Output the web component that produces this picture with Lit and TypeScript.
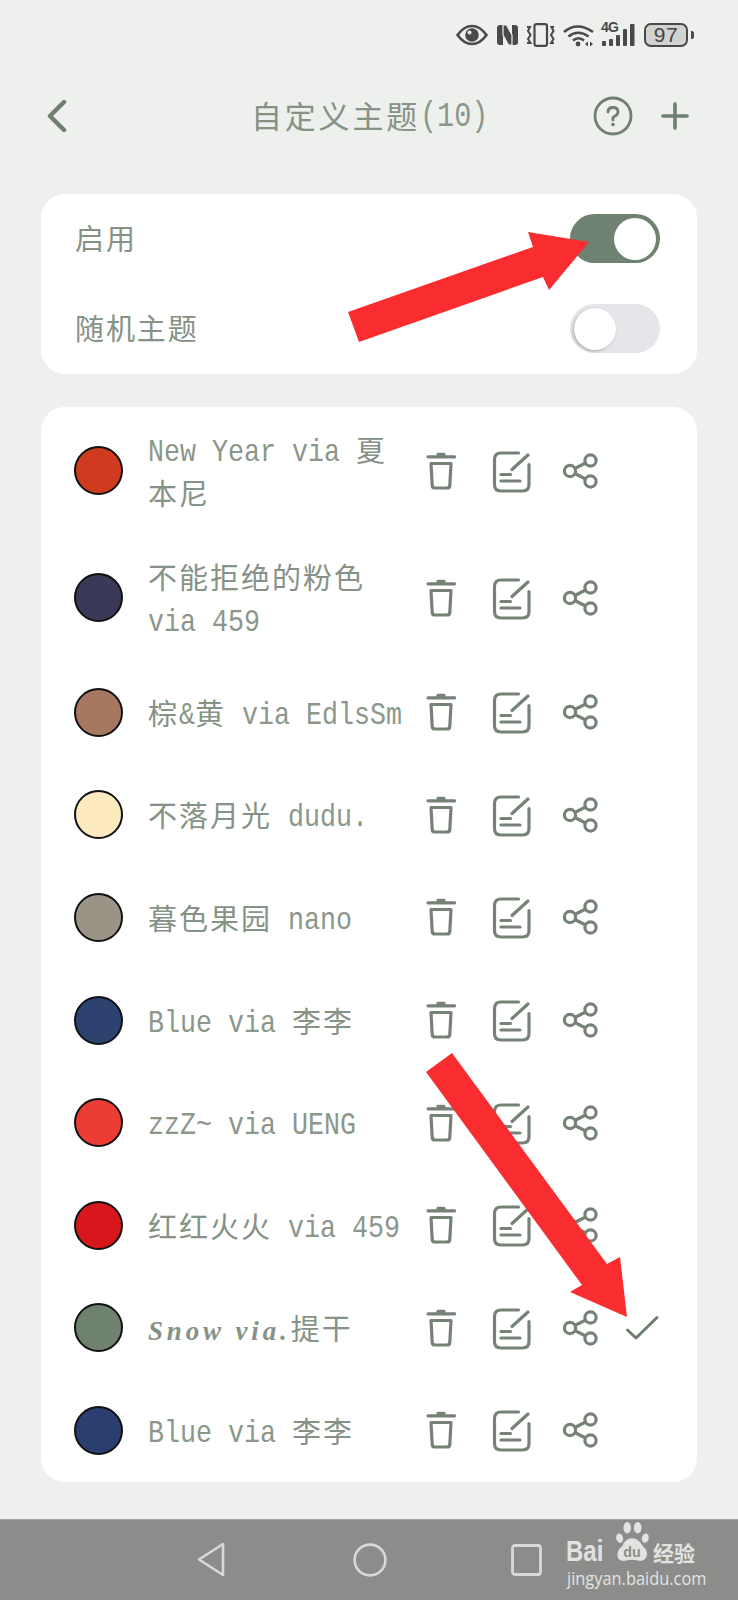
import { LitElement, html, css, svg } from "lit";
import { customElement } from "lit/decorators.js";

type Theme = { color: string; lines: string[]; script?: boolean; checked?: boolean };

const THEMES: Theme[] = [
  { color: "#d03a1f", lines: ["New Year via 夏", "本尼"] },
  { color: "#3a3a58", lines: ["不能拒绝的粉色", "via 459"] },
  { color: "#a67860", lines: ["棕&黄 via EdlsSm"] },
  { color: "#fdeabf", lines: ["不落月光 dudu."] },
  { color: "#9b9486", lines: ["暮色果园 nano"] },
  { color: "#2e4270", lines: ["Blue via 李李"] },
  { color: "#ec3c36", lines: ["zzZ~ via UENG"] },
  { color: "#d8171c", lines: ["红红火火 via 459"] },
  { color: "#6f8270", lines: ["Snow via.提干"], script: true, checked: true },
  { color: "#2b3e70", lines: ["Blue via 李李"] },
];

const trash = html`<svg class="ic" width="30" height="40" viewBox="0 0 30 40" fill="none" stroke="#768276" stroke-width="3.2" stroke-linecap="round" stroke-linejoin="round">
  <path d="M2 5.8H28.5" /><path d="M12 3.4H18" />
  <path d="M5 12.5H25L23.8 34.5Q23.6 37 21 37H9Q6.4 37 6.2 34.5Z" />
</svg>`;

const edit = html`<svg class="ic" width="40" height="44" viewBox="0 0 40 44" fill="none" stroke="#768276" stroke-width="3.2" stroke-linecap="round" stroke-linejoin="round">
  <path d="M27.5 4H10Q3.5 4 3.5 10.5V35.5Q3.5 42 10 42H31.5Q38 42 38 35.5V15.5" />
  <path d="M37 6L21 20.5" /><path d="M10 25.5H19.5" /><path d="M10 32H29" />
</svg>`;

const share = html`<svg class="ic" width="36" height="36" viewBox="0 0 36 36" fill="none" stroke="#768276" stroke-width="3.2">
  <circle cx="8" cy="18" r="5.6" /><circle cx="28.5" cy="7.5" r="5.6" /><circle cx="28.5" cy="28.5" r="5.6" />
  <path d="M12.8 15.5L23.7 10" /><path d="M12.8 20.5L23.7 26" />
</svg>`;

const check = html`<svg class="ic" width="40" height="40" viewBox="0 0 40 40" fill="none" stroke="#6f7d6f" stroke-width="3" stroke-linecap="round" stroke-linejoin="round">
  <path d="M5.5 22L14 30L35 9.5" />
</svg>`;

function segments(line: string, script?: boolean) {
  return line.split(/([\u4e00-\u9fff]+)/).filter(Boolean).map((s) =>
    /[\u4e00-\u9fff]/.test(s)
      ? html`<span class="cjk">${s}</span>`
      : script
      ? html`<span class="script">${s}</span>`
      : html`<span class="lat">${s}</span>`
  );
}

@customElement("app-root")
export class AppRoot extends LitElement {
  static styles = css`
    :host { display: block; position: relative; width: 738px; height: 1600px; overflow: hidden; background: #edf0ed;
      font-family: "Noto Sans CJK SC", sans-serif; color: #859285; }
    .status { height: 70px; display: flex; align-items: center; justify-content: flex-end; padding-right: 44px; box-sizing: border-box; }
    .status svg { display: block; flex: none; }
    .s-eye { margin-right: 9px; }
    .s-n { margin-right: 8px; }
    .s-vib { margin-right: 7px; }
    .s-wifi { margin-right: 7px; }
    .s-sig { margin-right: 8px; position: relative; width: 35px; height: 24px; }
    .g4 { position: absolute; left: 0; top: -3px; font: 700 14px/15px "Liberation Sans", sans-serif; color: #484a48; letter-spacing: -0.8px; }
    .batt { width: 44px; height: 24px; box-sizing: border-box; border: 2px solid #484a48; border-radius: 7px; background: #d2d3d0;
      font: 400 21px/20px "Liberation Sans", sans-serif; color: #444; text-align: center; letter-spacing: 0.5px; }
    .tip { width: 3px; height: 8px; background: #484a48; border-radius: 0 2px 2px 0; margin-left: 3px; }

    .header { height: 92px; display: flex; align-items: center; position: relative; }
    .back { margin-left: 46px; }
    .title { position: absolute; left: 251px; top: 0; font-size: 31px; line-height: 90px; white-space: pre; }
    .title .t-cjk { letter-spacing: 2.8px; }
    .title .t-lat { font: 400 28.5px/90px "Liberation Mono", monospace; display: inline-block; transform: scaleY(1.2); transform-origin: 50% 70%; color: #8a978a; }
    .h-right { margin-left: auto; display: flex; align-items: center; margin-right: 49px; gap: 28px; }

    .card { background: #fff; border-radius: 24px; margin: 0 41px; }
    .settings { margin-top: 32px; height: 180px; box-sizing: border-box; padding: 20px 37px 21px 34px; display: flex; flex-direction: column; gap: 41px; }
    .set-row { height: 49px; display: flex; align-items: center; justify-content: space-between; font-size: 29px; letter-spacing: 1.9px; }
    .set-label { padding-bottom: 4px; }
    .toggle { width: 90px; height: 49px; border-radius: 25px; box-sizing: border-box; display: flex; align-items: center; padding: 0 4px; }
    .toggle.on { background: #6f8170; justify-content: flex-end; }
    .toggle.off { background: #e6e6ea; justify-content: flex-start; }
    .knob { width: 42px; height: 42px; border-radius: 50%; background: #fff; }
    .off .knob { box-shadow: -1px 1px 3px rgba(0,0,0,0.28); }

    .list { margin-top: 33px; height: 1075px; }
    .row { display: grid; grid-template-columns: 49px 298px 40px 70px 69px 62px; align-items: center; padding-left: 33px; height: 102.6px; }
    .row.two { height: 127px; }
    .dot { width: 49px; height: 49px; box-sizing: border-box; border-radius: 50%; border: 2px solid #111; }
    .name { margin-left: 25px; font-size: 29px; line-height: 43px; white-space: pre; }
    .line { display: block; height: 43px; }
    .cjk { letter-spacing: 2px; font-size: 29px; }
    .lat { font: 400 26.67px/43px "Liberation Mono", monospace; display: inline-block; transform: scaleY(1.2); transform-origin: 50% 72%; color: #8a978a; }
    .script { font: italic 700 27px/43px "Liberation Serif", serif; letter-spacing: 3.85px; display: inline-block; }
    .slot { display: flex; align-items: center; justify-content: center; }
    .slot-2, .slot-3, .slot-4 { justify-content: flex-end; }
    .slot-3 { padding-right: 2px; }
    .ic { display: block; flex: none; }

    .nav { margin-top: 37px; height: 81px; box-sizing: border-box; background: #8c8d8a; border-top: 1px solid #a3a4a1; position: relative;
      display: flex; align-items: center; padding-left: 196px; }
    .nav svg.n { display: block; flex: none; }
    .n-circle { margin-left: 127px; }
    .n-square { margin-left: 124px; }
    .wm { position: absolute; left: 566px; top: 0; width: 135px; height: 81px; color: #e2e2e0; }
    .wm-bai { position: absolute; left: 0; top: 21px; font: 700 24px/20px "Liberation Sans", sans-serif; transform: scaleY(1.2); }
    .wm-du { position: absolute; left: 47px; top: 1px; }
    .wm-jy { position: absolute; left: 87px; top: 21px; font: 700 21px/22px "Noto Sans CJK SC", sans-serif; }
    .wm-url { position: absolute; left: 1px; top: 50px; font: 400 16.4px/15px "Open Sans", sans-serif; white-space: nowrap; transform: scaleY(1.15); }

    .arrows { position: absolute; left: 0; top: 0; pointer-events: none; }
  `;

  render() {
    return html`
      <div class="status">
        <svg class="s-eye" width="32" height="22" viewBox="0 0 32 22" fill="none">
          <path d="M1.5 11Q8 2 16 2T30.5 11Q24 20 16 20T1.5 11Z" stroke="#484a48" stroke-width="2.6" />
          <circle cx="16" cy="11" r="6.8" fill="#484a48" />
          <circle cx="13.5" cy="8.5" r="2" fill="#edf0ed" />
        </svg>
        <svg class="s-n" width="21" height="22" viewBox="0 0 21 22" fill="#484a48">
          <path d="M0 4Q0 1 3 1H6V21H3Q0 21 0 18Z" />
          <path d="M21 4Q21 1 18 1H15V21H18Q21 21 21 18Z" />
          <path d="M6 1H9.5L15 11V21H11.5L6 11Z" stroke="#edf0ed" stroke-width="1.2" />
        </svg>
        <svg class="s-vib" width="30" height="24" viewBox="0 0 30 24" fill="none" stroke="#484a48" stroke-width="2.2">
          <rect x="8.5" y="1.2" width="12.5" height="21.6" rx="2" />
          <path d="M1 4H4L2 8L4.5 12L2 16L4.5 20H1" stroke-width="2" />
          <path d="M28 4H25.5L27.5 8L25 12L27.5 16L25 20H28" stroke-width="2" />
        </svg>
        <svg class="s-wifi" width="31" height="24" viewBox="0 0 31 24" fill="none" stroke="#484a48" stroke-width="2.6">
          <path d="M1 9Q14 -2 30 9" /><path d="M5.5 13.5Q15 6 25.5 13.5" /><path d="M10 17.5Q15.5 13 21 17.5" />
          <circle cx="15" cy="21" r="2.4" fill="#484a48" stroke="none" />
          <path d="M22 21L25 18.5V23.5Z M30 21L27 18.5V23.5Z" fill="#484a48" stroke="none" />
        </svg>
        <div class="s-sig">
          <span class="g4">4G</span>
          <svg style="position:absolute;left:0;top:0" width="35" height="24" viewBox="0 0 35 24" fill="#484a48">
            <rect x="1" y="18" width="4" height="5" rx="1" /><rect x="8" y="16" width="4" height="7" rx="1" />
            <rect x="15" y="12" width="4" height="11" rx="1" /><rect x="22" y="6" width="4" height="17" rx="1" /><rect x="29" y="1" width="4.5" height="22" rx="1" />
          </svg>
        </div>
        <div class="batt">97</div>
        <div class="tip"></div>
      </div>

      <div class="header">
        <svg class="back" width="22" height="34" viewBox="0 0 22 34" fill="none" stroke="#6f7f70" stroke-width="4.4" stroke-linecap="round" stroke-linejoin="round">
          <path d="M18 3L4 17L18 31" />
        </svg>
        <div class="title"><span class="t-cjk">自定义主题</span><span class="t-lat">(10)</span></div>
        <div class="h-right">
          <svg width="40" height="40" viewBox="0 0 40 40" fill="none" stroke="#6f7f70" stroke-width="2.8">
            <circle cx="20" cy="20" r="18" />
            <path d="M15 16Q15 11.5 20 11.5T25 16Q25 18.5 22 20T20 24" stroke-linecap="round" />
            <circle cx="20" cy="28.5" r="1.8" fill="#6f7f70" stroke="none" />
          </svg>
          <svg width="28" height="28" viewBox="0 0 28 28" fill="none" stroke="#6f7f70" stroke-width="3.6" stroke-linecap="round">
            <path d="M14 2V26" /><path d="M2 14H26" />
          </svg>
        </div>
      </div>

      <div class="card settings">
        <div class="set-row"><span class="set-label">启用</span><div class="toggle on"><div class="knob"></div></div></div>
        <div class="set-row"><span class="set-label">随机主题</span><div class="toggle off"><div class="knob"></div></div></div>
      </div>

      <div class="card list">
        ${THEMES.map(
          (t) => html`
            <div class="row ${t.lines.length > 1 ? "two" : ""}">
              <div class="dot" style="background:${t.color}"></div>
              <div class="name">${t.lines.map((l) => html`<span class="line">${segments(l, t.script)}</span>`)}</div>
              <div class="slot">${trash}</div>
              <div class="slot slot-2">${edit}</div>
              <div class="slot slot-3">${share}</div>
              <div class="slot slot-4">${t.checked ? check : ""}</div>
            </div>
          `
        )}
      </div>

      <div class="nav">
        <svg class="n" width="30" height="36" viewBox="0 0 30 36" fill="none" stroke="#d9dad7" stroke-width="2.6" stroke-linejoin="round">
          <path d="M27 2V33L3 17.5Z" />
        </svg>
        <svg class="n n-circle" width="34" height="34" viewBox="0 0 34 34" fill="none" stroke="#d9dad7" stroke-width="2.6"><circle cx="17" cy="17" r="15.4" /></svg>
        <svg class="n n-square" width="31" height="32" viewBox="0 0 31 32" fill="none" stroke="#d9dad7" stroke-width="2.8"><rect x="1.5" y="1.5" width="28" height="29" rx="2.5" /></svg>
        <div class="wm">
          <span class="wm-bai">Bai</span>
          <svg class="wm-du" width="38" height="42" viewBox="0 0 40 44" fill="#e2e2e0">
            <ellipse cx="7" cy="18" rx="3.6" ry="5" transform="rotate(-15 7 18)" />
            <ellipse cx="15" cy="7" rx="4" ry="6" />
            <ellipse cx="26" cy="7" rx="4" ry="6" />
            <ellipse cx="34" cy="18" rx="3.6" ry="5" transform="rotate(15 34 18)" />
            <path d="M20 18Q27 18 31 26Q38 32 35 38Q32 43 26 41.5Q20 40 14 41.5Q7 43 5 38Q3 32 10 26Q13 18 20 18Z" />
            <text x="20" y="38" text-anchor="middle" font-family="Liberation Sans" font-weight="700" font-size="15" fill="#8c8d8a">du</text>
          </svg>
          <span class="wm-jy">经验</span>
          <span class="wm-url">jingyan.baidu.com</span>
        </div>
      </div>

      <svg class="arrows" width="738" height="1600" viewBox="0 0 738 1600" fill="#f92c2f">
        ${svg`<polygon points="589,242 528,232 533,247 348,312 359,342 543,277 549,290" />
        <polygon points="452,1053 607,1264 620,1257 627,1317 570,1292 582,1285 426,1072" />`}
      </svg>
    `;
  }
}
